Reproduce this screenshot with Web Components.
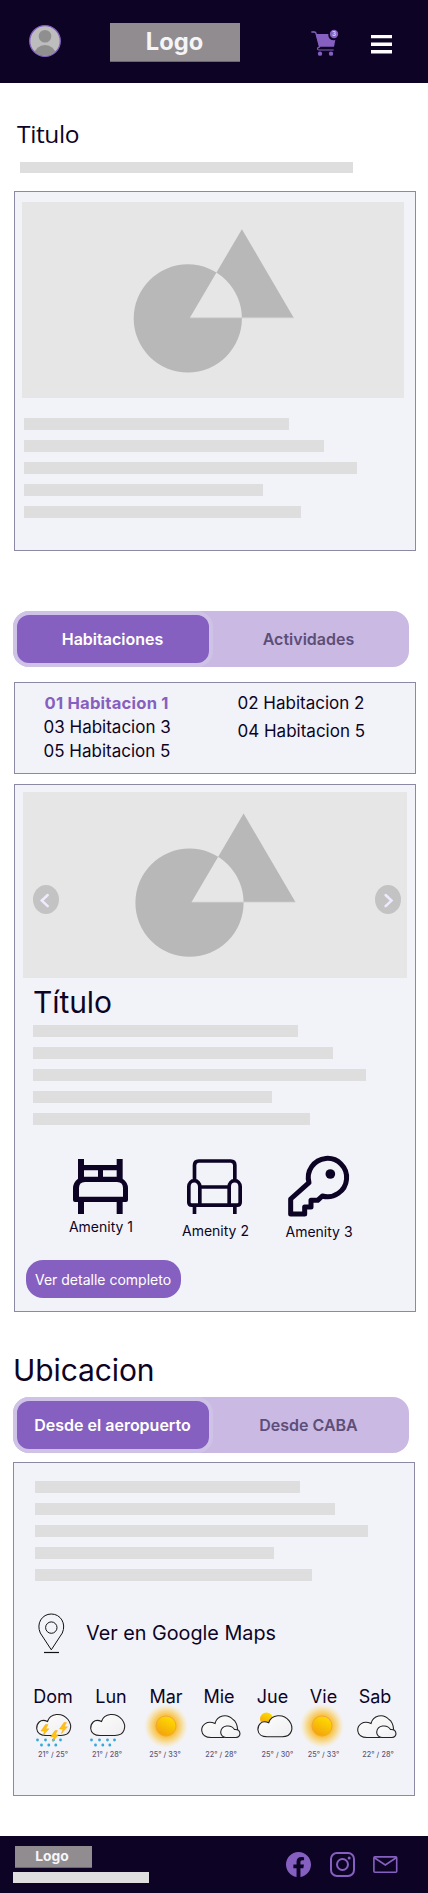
<!DOCTYPE html>
<html lang="es">
<head>
<meta charset="utf-8">
<title>Hospedaje</title>
<style>
html,body{margin:0;padding:0}
body{width:428px;background:#fff;color:#0d0425;font-family:Inter,"Liberation Sans",sans-serif}
</style>
</head>
<body>
<hotel-page></hotel-page>
<script>
const define = (name, css, html) => customElements.define(name, class extends HTMLElement {
  constructor() {
    super();
    this.attachShadow({mode: 'open'});
  }
  connectedCallback() {
    const t = document.createElement('template');
    t.innerHTML = `<style>*{box-sizing:border-box}svg{display:block;overflow:visible}${css}</style>` + (typeof html === 'function' ? html(this) : html);
    this.shadowRoot.replaceChildren(t.content.cloneNode(true));
  }
});

define('brand-logo', `:host{display:flex;align-items:center;justify-content:center;box-sizing:border-box;width:130px;height:39px;padding-right:1px;background:#918c90;border-bottom:1px solid #6b666f;color:#f5f5f8;font-weight:700;font-size:23.7px;line-height:1}
:host([small]){width:77px;height:22px;padding-right:3px;font-size:13.8px}`, '<slot></slot>');

define('user-avatar', `:host{display:block;width:32px;height:32px}`,
`<svg width="32" height="32" viewBox="0 0 32 32"><defs><clipPath id="c"><circle cx="16" cy="16" r="14.8"/></clipPath></defs><circle cx="16" cy="16" r="15.3" fill="#bdbdbd" stroke="#8660c0" stroke-width="1.3"/><g fill="#8f8f8f" clip-path="url(#c)"><circle cx="16" cy="11.3" r="6.3"/><ellipse cx="16" cy="29" rx="10.5" ry="9"/></g></svg>`);

define('cart-icon', `:host{display:block;width:27px;height:26px}text{font:500 19px Inter,sans-serif}`,
`<svg width="27.4" height="26" viewBox="0 0 82 78" fill="#8660c0"><path d="M1 6h9q4 0 5 4l11 42" fill="none" stroke="#8660c0" stroke-width="4"/><path d="M14 12H52C50 26 63 34 73 29L69 50H25Z"/><path d="M25 51l-5 3q-2 6 5 6h43" fill="none" stroke="#8660c0" stroke-width="3.5"/><circle cx="27" cy="71" r="6.5"/><circle cx="60" cy="71" r="6.5"/><circle cx="69" cy="12" r="12.5"/><text x="69" y="19" text-anchor="middle" fill="#efeaf8">3</text></svg>`);

define('menu-icon', `:host{display:block;width:21px;height:19px}`,
`<svg width="21" height="19" fill="#fff"><path d="M0 0h21v3.3H0zM0 7.6h21v3.4H0zM0 15h21v3.6H0z"/></svg>`);

define('site-header', `:host{display:flex;align-items:flex-start;height:83px;background:#0d0425;padding-left:29px}
user-avatar{margin-top:25px}brand-logo{margin:23px 0 0 49px}cart-icon{margin:30px 0 0 71px}menu-icon{margin:35px 0 0 33px}`,
`<user-avatar></user-avatar><brand-logo>Logo</brand-logo><cart-icon></cart-icon><menu-icon></menu-icon>`);

define('ui-card', `:host{display:block;box-sizing:border-box;width:402px;margin-left:14px;background:#f2f3f8;border:1px solid #8c89a5}`, '<slot></slot>');

define('text-lines', `:host{display:flex;flex-direction:column;gap:10px}i{display:block;height:12px;background:#dedede}`,
() => [265, 300, 333, 239.3, 277.2].map(w => `<i style="width:${w}px"></i>`).join(''));

define('shape-image', `:host{display:block;background:#e6e6e6;position:relative}`,
el => `<svg width="${el.getAttribute('w')}" height="${el.getAttribute('h')}"><g transform="translate(${el.getAttribute('at')})"><path fill="#b8b8b8" fill-rule="evenodd" d="M0 89.2a54.1 54.1 0 1 0 108.2 0a54.1 54.1 0 1 0 -108.2 0zM108.2 0L160 88.5H56.2z"/><path d="M56.2 88.6H160" stroke="#d0d0d0" stroke-width=".8"/></g></svg><slot></slot>`);

define('carousel-arrow', `:host{display:block;position:absolute;top:93px;width:26px;height:29px}:host([prev]){left:9.7px}:host([next]){right:5.6px}`,
el => `<svg width="26" height="29"><ellipse cx="13" cy="14.5" rx="13" ry="14.5" fill="#c3c3c3"/><path d="${el.hasAttribute('prev') ? 'M14.7 10L8.8 15.6l5.9 5.6' : 'M10.6 10l5.9 5.6-5.9 5.6'}" fill="none" stroke="#f0eaff" stroke-width="2.5" stroke-linecap="round"/></svg>`);

define('tab-switch', `:host{display:flex;width:396px;height:56px;margin-left:13px;background:#cab9e3;border-radius:16px;font-weight:600;font-size:16px;line-height:20px}
div{display:flex;align-items:center;justify-content:center;width:200px;height:56px;color:#fff;background:#8660c0;border:4px solid #cfc2e7;border-radius:16px;padding-right:1px}
div+div{width:196px;color:#5c4e78;background:none;border:0;padding-right:5px}`,
`<div><slot name="on"></slot></div><div><slot name="off"></slot></div>`);

define('room-list', `:host{display:flex;height:90px;padding-left:28.5px;font-size:17px;line-height:20px}
div{display:flex;flex-direction:column;flex:none;width:194px;padding-top:9.5px;white-space:nowrap}
span{height:24px}div:first-child span:nth-child(2){height:25.5px}div:last-child{width:150px}div:last-child span{height:28.5px}
b{color:#8660c0;font-weight:700;font-size:16.6px;letter-spacing:.22px;padding-left:1px}`,
`<div><span><b>01 Habitacion 1</b></span><span>03 Habitacion 3</span><span>05 Habitacion 5</span></div><div><span>02 Habitacion 2</span><span>04 Habitacion 5</span></div>`);

const amenityArt = {
  bed: `<svg width="55" height="55" viewBox="0 0 165 165" fill="#0d0425"><path d="M15 0H33V18H131V0H149V59Q165 70 165 88V123Q165 129 159 129H149V165H131V129H33V165H15V129H6Q0 129 0 123V88Q0 70 15 59ZM33 34V53H75V34ZM90 34V53H131V34ZM36 69Q18 69 18 87V113H150V87Q150 69 132 69Z" fill-rule="evenodd"/></svg>`,
  chair: `<svg width="55" height="55" viewBox="0 0 165 165" fill="none" stroke="#0d0425" stroke-width="11"><path d="M22.5 64V19Q22.5 6 35 6H131Q143.500 6 143.500 19V64M38 84H127M5.500 83A16.500 18 0 0 1 38.500 83V138M159.500 83A16.500 18 0 0 0 126.500 83V138M5.500 81V130Q5.500 138.500 14 138.500H151Q159.500 138.500 159.500 130V81M22.500 139V165M143.500 139V165"/></svg>`,
  key: `<svg width="61" height="61" viewBox="0 0 183 183"><path d="M63 80A57.500 57.500 0 1 1 103 120L89 133H69V153H50V174H8V129L63 80Z" fill="none" stroke="#0d0425" stroke-width="15" stroke-linejoin="round"/><circle cx="127" cy="54" r="14.500" fill="#0d0425"/></svg>`
};
define('amenity-item', `:host{display:flex;flex-direction:column;align-items:center;width:80px;font-size:14px;line-height:20px;white-space:nowrap}
span{margin-left:var(--label-dx,0)}`,
el => amenityArt[el.getAttribute('icon')] + '<span><slot></slot></span>');

define('pill-button', `:host{display:flex;align-items:center;justify-content:center;width:155px;height:38px;padding:1px 1px 0 0;box-sizing:border-box;border-radius:17px;background:#8660c0;color:#fff;font-size:14px;white-space:nowrap}`, '<slot></slot>');

const defs = `<defs><linearGradient id="w" x2="1" y2="1"><stop stop-color="#fff"/><stop offset="1" stop-color="#eeecef"/></linearGradient><linearGradient id="s" x1=".8" x2=".3" y2="1"><stop stop-color="#ffe000"/><stop offset="1" stop-color="#f2a20c"/></linearGradient><radialGradient id="g"><stop offset=".45" stop-color="#f9b81c" stop-opacity=".9"/><stop offset=".7" stop-color="#fbc440" stop-opacity=".55"/><stop offset="1" stop-color="#ffdc78" stop-opacity="0"/></radialGradient></defs>`;
const bigCloud = `<path d="M15 24.500H30C40 24.500 42 15 37 8.500C31 1 19 2 16.500 10.500C9 7 5.500 13 5.700 17.500C6 22 10 24.500 15 24.500Z" fill="url(#w)" stroke="#222" stroke-width="1.1"/>`;
const dots = `<path d="M6.500 28.800v.2M14.500 28.800v.2M22.500 28.800v.2M29.500 28.800v.2M10.500 34v.2M17.800 34v.2M24.800 34v.2" stroke="#35a8d8" stroke-width="2.8" stroke-linecap="round"/>`;
const bolt = (x, y) => `<path transform="translate(${x} ${y})" d="M4.500 0L0 6.500H3.500L2 11L8 4.300H4.700L7 0Z" fill="#ffc20d" stroke="#f0a008" stroke-width=".4"/>`;
const art = {
  rain: bigCloud + dots,
  storm: bigCloud + dots + bolt(10, 13.500) + bolt(19.500, 19.500) + bolt(28.500, 11.500),
  sun: `<circle cx="23" cy="15" r="22" fill="url(#g)"/><circle cx="23" cy="15" r="10" fill="url(#s)" stroke="#f4a63c" stroke-width="1"/>`,
  clouds: `<path d="M13 26.500H33C43 26.500 40 11 35 8.500C29 2 19 4.500 17 12.500C9 9 3.500 14 3.700 19.500C4 24 8 26.500 13 26.500Z" fill="url(#w)" stroke="#222" stroke-width="1.1"/><path d="M28 26.500H38C43.500 26.500 43.500 18 36.500 18.500C33 13 23.500 14 22.700 21C22.500 24 25 26.500 28 26.500Z" fill="url(#w)" stroke="#222" stroke-width="1.1"/>`,
  partly: `<circle cx="13.500" cy="8" r="6.500" fill="url(#s)"/><g transform="translate(-.8 1.300)">${bigCloud}</g>`
};
define('weather-day', `:host{display:flex;flex-direction:column;align-items:center;width:46px;font-size:18px;line-height:20px;white-space:nowrap}
.n{display:flex;justify-content:center;width:46px}svg{margin-top:4px}
small{display:block;font:500 7.2px/10px Inter,sans-serif;letter-spacing:.1px;color:#5f5878;margin-top:2px}`,
el => `<span class="n" style="margin-left:${el.getAttribute('dx') * 2}px"><slot></slot></span><svg width="46" height="37">${defs}${art[el.getAttribute('kind')]}</svg><small style="margin-left:${el.getAttribute('tx') * 2}px">${el.getAttribute('temp')}</small>`);

define('map-link', `:host{display:flex;align-items:center;gap:21px;height:41px;font-size:19.8px;line-height:38px}
span{margin-top:-2px}`,
`<svg width="27" height="41" fill="none" stroke="#111" stroke-width="1"><path d="M13.300 36.800L2.300 20C-2 10.500 4 1 13.300 1S28.500 10.500 24.300 20Z"/><circle cx="13.300" cy="14.600" r="5.700"/><path d="M6 39.500h15" stroke-width="1.200"/></svg><span><slot></slot></span>`);

define('social-links', `:host{display:flex;align-items:center}`,
`<svg width="25" height="25" viewBox="0 0 24 24" fill="#8660c0"><path d="M24 12.070C24 5.400 18.630 0 12 0S0 5.400 0 12.070C0 18.100 4.390 23.090 10.130 24v-8.440H7.080v-3.490h3.050V9.410c0-3.020 1.790-4.700 4.530-4.700 1.310 0 2.690.24 2.690.24v2.970h-1.510c-1.490 0-1.960.93-1.960 1.890v2.260h3.330l-.53 3.490h-2.800V24C19.610 23.090 24 18.100 24 12.070z"/></svg>
<svg style="margin-left:19px" width="25" height="25" viewBox="0 0 25 25" fill="none" stroke="#8660c0" stroke-width="2"><rect x="1" y="1" width="23" height="23" rx="6"/><circle cx="12.500" cy="12.500" r="5.500"/><circle cx="19.200" cy="5.900" r="1.500" fill="#8660c0" stroke="none"/></svg>
<svg style="margin-left:18px" width="25" height="17" fill="none" stroke="#8660c0" stroke-width="1.600"><rect x=".9" y=".9" width="22.800" height="15.300" rx="1"/><path d="M1 1.500L12.300 9 23.600 1.500"/></svg>`);

define('site-footer', `:host{display:flex;height:57px;background:#0d0425}section{width:286px;padding:10px 0 0 13px}brand-logo{margin-left:2px}i{display:block;width:136px;height:11px;background:#dedede;margin-top:4px}social-links{height:57px}`,
`<section><brand-logo small>Logo</brand-logo><i></i></section><social-links></social-links>`);

define('hotel-page', `:host{display:block;width:428px;height:1893px;overflow:hidden}
h1,h2{margin:0;font-weight:400}
h1{font:400 24.5px/30px "Open Sans","Noto Sans",sans-serif;padding:36px 0 0 17px;letter-spacing:-.35px;height:79px}
h2{font-size:30px;line-height:36px;letter-spacing:-.1px}
.bar{width:333px;height:11px;margin-left:20px;background:#dedede}
.one{margin-top:18px;height:360px}.one shape-image{width:382px;height:196px;margin:10px 0 0 7px}.one text-lines{margin:20px 0 0 9px}
.t1{margin-top:60px}.rooms{margin-top:15px;height:92px}
.two{height:528px;margin-top:10px}.two shape-image{width:384px;height:186px;margin:7px 0 0 8px}.two h2{margin:6px 0 0 18px}.two text-lines{margin:5px 0 0 18px}
.am{display:flex;align-items:flex-start;height:88px;margin-top:31px;padding-left:45px}
.am :nth-child(1){margin-top:3px;gap:3px;--label-dx:2px}.am :nth-child(2){margin:3px 0 0 34px;gap:7px;--label-dx:3px}.am :nth-child(3){margin-left:24px;gap:5px;--label-dx:2px}
.two pill-button{margin:16px 0 0 11px}
.ub{margin:40px 0 0 13px}.t2{margin-top:9px}
.three{margin:9px 0 0 13px;height:334px}.three text-lines{margin:18px 0 0 21px}.three map-link{margin:32px 0 0 24px}
.days{display:grid;grid-template-columns:54px 58px 55px 55px 46px 55px 46px;margin:33px 0 0 17px}
site-footer{margin-top:40px}`,
`<site-header></site-header>
<h1>Titulo</h1><div class="bar"></div>
<ui-card class="one"><shape-image w="382" h="196" at="111.700 27.200"></shape-image><text-lines></text-lines></ui-card>
<tab-switch class="t1"><span slot="on">Habitaciones</span><span slot="off">Actividades</span></tab-switch>
<ui-card class="rooms"><room-list></room-list></ui-card>
<ui-card class="two"><shape-image w="384" h="186" at="112.400 21.500"><carousel-arrow prev></carousel-arrow><carousel-arrow next></carousel-arrow></shape-image>
<h2>Título</h2><text-lines></text-lines>
<div class="am"><amenity-item icon="bed">Amenity 1</amenity-item><amenity-item icon="chair">Amenity 2</amenity-item><amenity-item icon="key">Amenity 3</amenity-item></div>
<pill-button>Ver detalle completo</pill-button></ui-card>
<h2 class="ub">Ubicacion</h2>
<tab-switch class="t2"><span slot="on">Desde el aeropuerto</span><span slot="off">Desde CABA</span></tab-switch>
<ui-card class="three"><text-lines></text-lines><map-link>Ver en Google Maps</map-link>
<div class="days"><weather-day kind="storm" dx="-1" tx="-1" temp="21° / 25°">Dom</weather-day><weather-day kind="rain" dx="3" tx="-1" temp="21° / 28°">Lun</weather-day><weather-day kind="sun" dx="0" tx="-1" temp="25° / 33°">Mar</weather-day><weather-day kind="clouds" dx="-2" tx="0" temp="22° / 28°">Mie</weather-day><weather-day kind="partly" dx="-3.5" tx="1.5" temp="25° / 30°">Jue</weather-day><weather-day kind="sun" dx="1.5" tx="1.5" temp="25° / 33°">Vie</weather-day><weather-day kind="clouds" dx="-2" tx="1" temp="22° / 28°">Sab</weather-day></div></ui-card>
<site-footer></site-footer>`);
</script>
</body>
</html>
